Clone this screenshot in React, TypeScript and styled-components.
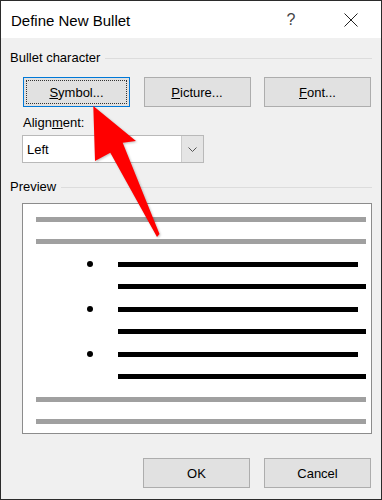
import React from 'react';
import styled, { createGlobalStyle, css } from 'styled-components';

const GlobalStyle = createGlobalStyle`
	html, body {
		margin: 0;
		padding: 0;
		background: #ffffff;
	}
	body {
		font-family: "Liberation Sans", Arial, sans-serif;
	}
`;

const Dialog = styled.div`
	position: relative;
	width: 382px;
	height: 500px;
	box-sizing: border-box;
	border: 1px solid #2b2b2b;
	background: #f0f0f0;
	display: flex;
	flex-direction: column;
	font-size: 13px;
	color: #000;
`;

const TitleBar = styled.div`
	height: 37px;
	background: #ffffff;
	display: flex;
	align-items: center;
	padding-left: 10px;
	font-size: 15px;
`;

const Title = styled.div`
	flex: 1;
	margin-top: 1px;
`;

const TitleButton = styled.div`
	width: 60px;
	height: 37px;
	display: flex;
	align-items: center;
	justify-content: center;
	color: #444;
	font-size: 16px;
`;

const Body = styled.div`
	display: flex;
	flex-direction: column;
	padding: 11px 9px 0;
`;

const GroupHeader = styled.div`
	display: flex;
	align-items: center;
	gap: 5px;
	height: 18px;
	line-height: 18px;

	&::after {
		content: '';
		flex: 1;
		height: 1px;
		background: #dcdcdc;
	}
`;

const ButtonRow = styled.div`
	display: flex;
	justify-content: space-between;
	margin-top: 10px;
	padding: 0 1px 0 13px;
`;

const Button = styled.button<{ $focused?: boolean }>`
	position: relative;
	width: 107px;
	height: 30px;
	box-sizing: border-box;
	border: 1px solid #adadad;
	background: #e1e1e1;
	font-family: inherit;
	font-size: 13px;
	color: #000;
	padding: 0;

	${(p) =>
		p.$focused &&
		css`
			border-color: #0078d7;
			&::after {
				content: '';
				position: absolute;
				inset: 2px;
				border: 1px dotted #333;
			}
		`}
`;

const FieldLabel = styled.div`
	margin-top: 8px;
	padding-left: 13px;
	height: 16px;
	line-height: 16px;
`;

const Select = styled.div`
	margin: 4px 0 0 12px;
	width: 182px;
	height: 28px;
	box-sizing: border-box;
	border: 1px solid #b9b9b9;
	background: #ffffff;
	display: flex;
	align-items: stretch;
`;

const SelectValue = styled.div`
	flex: 1;
	padding-left: 4px;
	display: flex;
	align-items: center;
`;

const DropButton = styled.div`
	width: 21px;
	background: #e5e5e5;
	border-left: 1px solid #cccccc;
	display: flex;
	align-items: center;
	justify-content: center;
`;

const PreviewHeader = styled(GroupHeader)`
	margin-top: 15px;
`;

const PreviewBox = styled.div`
	margin: 7px 0 0 12px;
	height: 231px;
	box-sizing: border-box;
	border: 1px solid #8c8c8c;
	background: #ffffff;
	padding: 4px 5px 0 13px;
	display: grid;
	grid-template-rows: repeat(10, 22.5px);
	align-items: center;
`;

const PreviewRow = styled.div<{ $indent: number }>`
	display: flex;
	align-items: center;
	padding-left: ${(p) => p.$indent}px;
`;

const Dot = styled.div`
	width: 6px;
	height: 6px;
	border-radius: 50%;
	background: #000;
	margin-right: 25px;
`;

const TextLine = styled.div<{ $tone: 'gray' | 'black'; $short?: boolean }>`
	flex: 1;
	height: 5px;
	background: ${(p) => (p.$tone === 'gray' ? '#a0a0a0' : '#000000')};
	margin-right: ${(p) => (p.$short ? 8 : 0)}px;
`;

const Footer = styled.div`
	display: flex;
	justify-content: flex-end;
	gap: 14px;
	margin-top: 24px;
	padding-right: 1px;
`;

const Arrow = styled.svg`
	position: absolute;
	left: 85px;
	top: 100px;
	width: 80px;
	height: 140px;
	pointer-events: none;
	filter: drop-shadow(1px 1px 1px rgba(0, 0, 0, 0.25));
`;

type Row = { kind: 'gray' } | { kind: 'bullet' } | { kind: 'cont' };

const rows: Row[] = [
	{ kind: 'gray' },
	{ kind: 'gray' },
	{ kind: 'bullet' },
	{ kind: 'cont' },
	{ kind: 'bullet' },
	{ kind: 'cont' },
	{ kind: 'bullet' },
	{ kind: 'cont' },
	{ kind: 'gray' },
	{ kind: 'gray' },
];

const App: React.FC = () => {
	return (
		<>
			<GlobalStyle />
			<Dialog>
				<TitleBar>
					<Title>Define New Bullet</Title>
					<TitleButton>?</TitleButton>
					<TitleButton>
						<svg width="14" height="14" viewBox="0 0 14 14">
							<path d="M0.5 0.5 L13.5 13.5 M13.5 0.5 L0.5 13.5" stroke="#222" strokeWidth="1" />
						</svg>
					</TitleButton>
				</TitleBar>
				<Body>
					<GroupHeader>Bullet character</GroupHeader>
					<ButtonRow>
						<Button $focused>
							<u>S</u>ymbol...
						</Button>
						<Button>
							<u>P</u>icture...
						</Button>
						<Button>
							<u>F</u>ont...
						</Button>
					</ButtonRow>
					<FieldLabel>
						Align<u>m</u>ent:
					</FieldLabel>
					<Select>
						<SelectValue>Left</SelectValue>
						<DropButton>
							<svg width="9" height="5" viewBox="0 0 9 5">
								<path d="M0.5 0.5 L4.5 4.5 L8.5 0.5" fill="none" stroke="#555" strokeWidth="1" />
							</svg>
						</DropButton>
					</Select>
					<PreviewHeader>Preview</PreviewHeader>
					<PreviewBox>
						{rows.map((row, i) => {
							if (row.kind === 'gray') {
								return (
									<PreviewRow key={i} $indent={0}>
										<TextLine $tone="gray" />
									</PreviewRow>
								);
							}
							if (row.kind === 'bullet') {
								return (
									<PreviewRow key={i} $indent={51}>
										<Dot />
										<TextLine $tone="black" $short />
									</PreviewRow>
								);
							}
							return (
								<PreviewRow key={i} $indent={82}>
									<TextLine $tone="black" />
								</PreviewRow>
							);
						})}
					</PreviewBox>
					<Footer>
						<Button>OK</Button>
						<Button>Cancel</Button>
					</Footer>
				</Body>
				<Arrow viewBox="0 0 80 140">
					<polygon
						points="7.3,5 50,40 36.7,41.7 73.5,133 71,136 24.3,51.7 9,60"
						fill="#ff0000"
					/>
				</Arrow>
			</Dialog>
		</>
	);
};

export default App;
